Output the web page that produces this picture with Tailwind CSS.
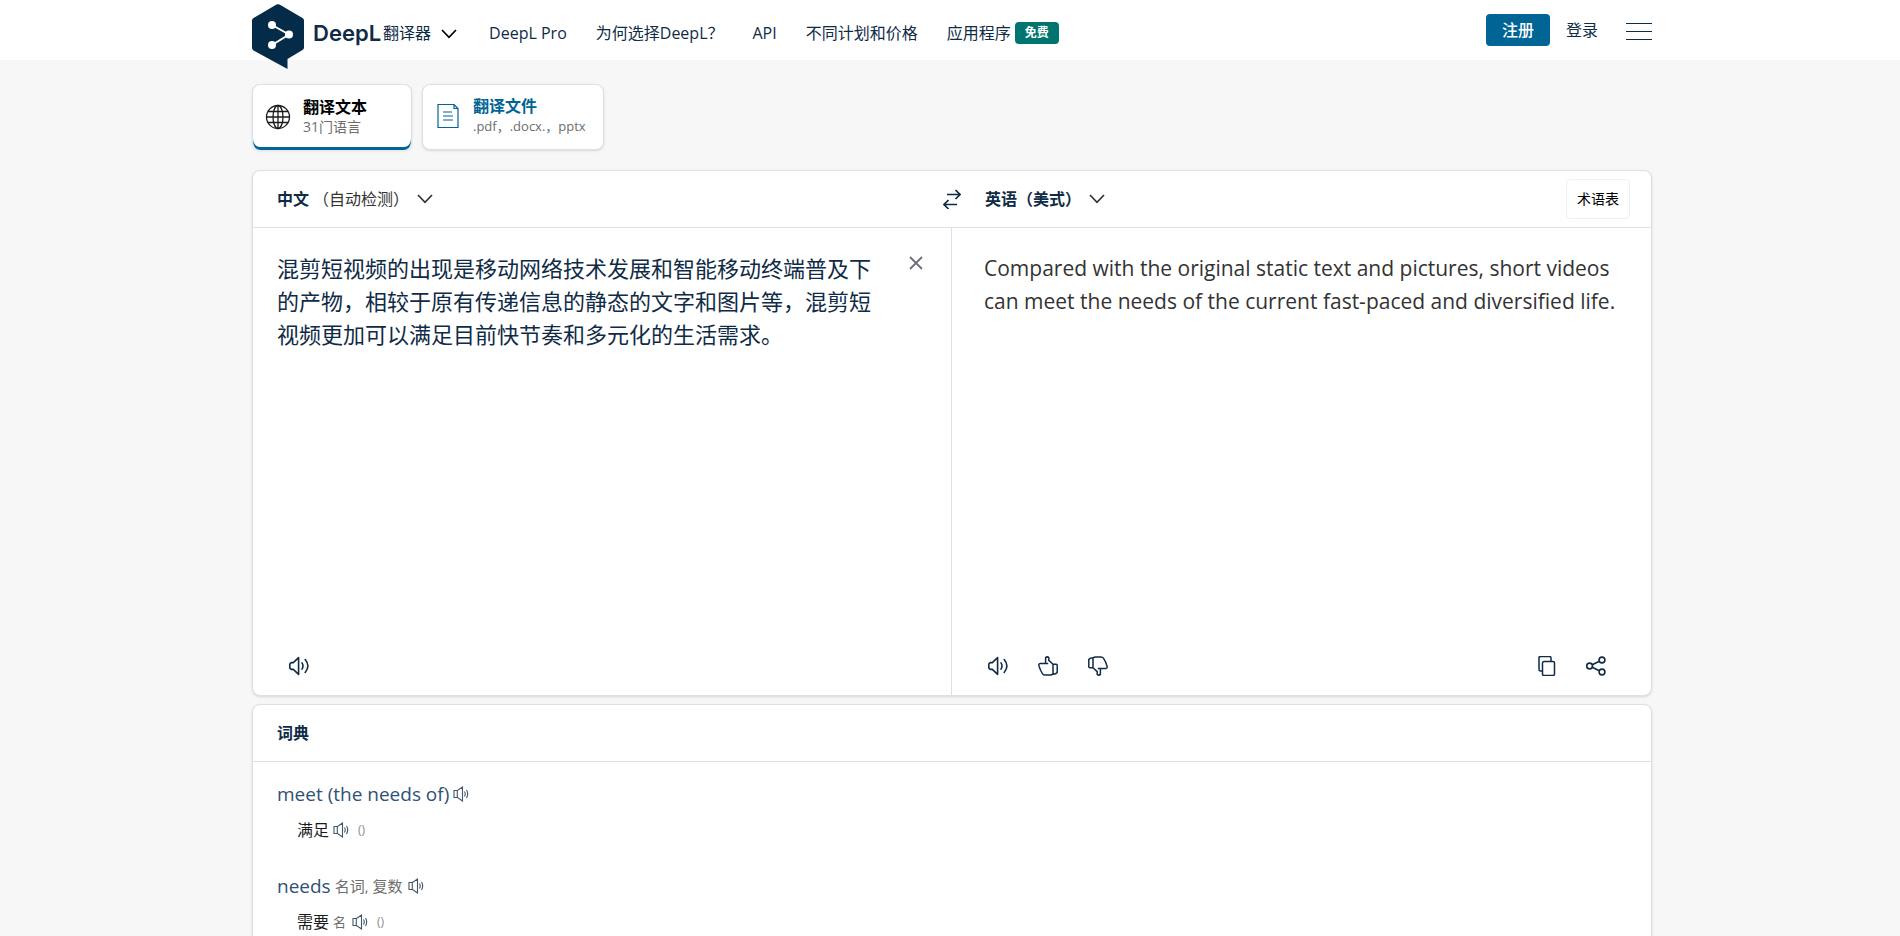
<!DOCTYPE html>
<html lang="zh-CN">
<head>
<meta charset="utf-8">
<meta name="viewport" content="width=device-width, initial-scale=1">
<title>DeepL翻译</title>
<script src="https://cdn.jsdelivr.net/npm/@tailwindcss/browser@4"></script>
</head>
<body class="min-h-screen overflow-hidden bg-[#f7f7f7] font-['Open_Sans','Noto_Sans_CJK_SC',sans-serif] text-base leading-6 text-[#0f2b46]">
<svg class="hidden" aria-hidden="true">
  <symbol id="speaker" viewBox="0 0 20 20"><path d="M9.6 1.6v16.800L4.300 13.400H2.200L.8 12V8l1.400-1.400h2.100z M13 6.900q2 3.100 0 6.200 M16.200 3.600q5.400 6.400 0 12.800" fill="none" stroke="currentColor" stroke-width="1.600" stroke-linejoin="round" stroke-linecap="round"/></symbol>
  <symbol id="speaker-small" viewBox="0 0 17 16"><path d="M9.500 1v14L4.500 11.500H1v-7h3.500z M4.300 4.500v7 M11.500 5.500q1.500 2.500 0 5 M13.500 4q2.400 4 0 8" fill="none" stroke="currentColor" stroke-width="1.100"/></symbol>
  <symbol id="chevron" viewBox="0 0 16 10"><path d="M1 1l7 7.300L15 1" fill="none" stroke="currentColor" stroke-width="1.700"/></symbol>
  <symbol id="thumb" viewBox="0 0 20 20"><path d="M15 8.200H18.200Q19.200 8.200 19.200 9.200V16.500Q18 18.300 15 18.300Z M15 8.200L10.800 4.400V1.600Q9.200.2 7.600 1.600V7.400H9.600 M7.600 7.400H2.200Q.6 7.600.8 9.400Q2 14 4.600 17.800Q5.400 19 7 19H12.600L15 18.200" fill="none" stroke="currentColor" stroke-width="1.500" stroke-linejoin="round" stroke-linecap="round"/></symbol>
</svg>

<header class="h-[60px] bg-white pl-1">
  <div class="mx-auto flex h-[60px] max-w-[1400px] items-center">
    <a href="#" class="flex items-center" aria-label="DeepL 翻译器">
      <svg class="mt-3 h-[65px] w-[52px]" viewBox="0 0 52 65"><path d="M24.500.5q1.500-.7 3 0L50.500 14q1.500.8 1.500 2.500v27q0 1.700-1.500 2.500L35.500 55v10L1.500 46.500Q0 45.500 0 43.500v-27Q0 14.800 1.500 14z" fill="#042b48"/><path d="M20 21l17 9.500L20 41" fill="none" stroke="#fff" stroke-width="2"/><g fill="#fff"><circle cx="20" cy="21" r="4"/><circle cx="37" cy="30.500" r="4"/><circle cx="20" cy="41" r="4"/></g></svg>
      <span class="ml-[9px] mt-1.5 flex items-center"><span class="font-['Inter'] text-[22px] font-semibold">DeepL</span><span class="ml-0.5">翻译器</span></span>
    </a>
    <button class="ml-2 mt-2 p-0.5 text-black" aria-label="更多产品"><svg class="h-[10px] w-4"><use href="#chevron"/></svg></button>
    <nav class="ml-[30px] mt-1.5 flex items-center gap-[29px]">
      <a href="#" class="font-medium">DeepL Pro</a>
      <a href="#">为何选择DeepL？</a>
      <a href="#" class="font-medium">API</a>
      <a href="#">不同计划和价格</a>
      <a href="#" class="flex items-center">应用程序<span class="ml-1 flex h-[22px] items-center rounded bg-[#007570] px-2.5 text-xs font-bold text-white">免费</span></a>
    </nav>
    <div class="ml-auto flex items-center">
      <button class="h-8 w-16 rounded bg-[#006494] font-medium text-white">注册</button>
      <a href="#" class="ml-4">登录</a>
      <button class="ml-7 mt-1" aria-label="菜单"><svg class="h-[18px] w-[26px]" viewBox="0 0 26 18" shape-rendering="crispEdges"><path d="M0 .5h26M0 8.500h26M0 16.500h26" stroke="#0f2b46"/></svg></button>
    </div>
  </div>
</header>

<div class="pl-1">
<main class="mx-auto max-w-[1400px] pt-6">
  <div class="flex gap-[10px]">
    <button class="flex h-[66px] w-40 items-center rounded-lg border border-b-0 border-[#dae1e8] bg-white pb-0.5 pl-3 text-left shadow-[inset_0_-3px_0_#006494,0_1px_3px_#0000001a]">
      <svg class="size-[26px] text-[#1b1b1b]" viewBox="0 0 26 26" fill="none" stroke="currentColor" stroke-width="1.300"><circle cx="13" cy="13" r="11.500"/><ellipse cx="13" cy="13" rx="5" ry="11.500"/><path d="M13 1.500v23M1.500 13h23M3 7.500h20M3 18.500h20"/></svg>
      <span class="ml-3 flex flex-col"><span class="leading-5 font-bold text-black">翻译文本</span><span class="text-sm leading-5 text-[#6e6e6e]">31门语言</span></span>
    </button>
    <button class="flex h-[66px] w-[182px] items-center rounded-lg border border-[#dae1e8] bg-white pb-0.5 pl-3.5 text-left shadow-sm">
      <svg class="h-[26px] w-[22px] text-[#006494]" viewBox="0 0 22 26" fill="none" stroke="currentColor" stroke-width="1.200"><path d="M1 1.500h16l4 4v19H1z M17 1.500v4h4 M6 9h9 M6 13h10 M6 17h10"/></svg>
      <span class="ml-3.5 flex flex-col whitespace-nowrap"><span class="leading-5 font-bold text-[#006494]">翻译文件</span><span class="text-[13px] leading-5 text-[#6e6e6e]">.pdf，.docx.，pptx</span></span>
    </button>
  </div>

  <section class="mt-5 rounded-lg border border-[#dae1e8] bg-white shadow-sm">
    <div class="grid h-[57px] grid-cols-2 border-b border-[#dae1e8]">
      <div class="flex items-center pl-6">
        <button class="flex items-center"><span class="font-bold">中文</span><span class="ml-1 text-[#333]">（自动检测）</span><svg class="ml-2 h-[10px] w-4 text-[#333]"><use href="#chevron"/></svg></button>
        <button class="-mr-[9px] ml-auto" aria-label="交换语言"><svg class="h-5 w-[18px]" viewBox="0 0 18 20" fill="none" stroke="currentColor" stroke-width="1.700"><path d="M4 5.500h13M12.500 1l4.500 4.500L12.500 10M14 15.500H1M5.500 11L1 15.500 5.500 20"/></svg></button>
      </div>
      <div class="flex items-center pl-[33px] pr-[21px]">
        <button class="flex items-center font-bold"><span>英语（美式）</span><svg class="ml-2 h-[10px] w-4 text-[#333]"><use href="#chevron"/></svg></button>
        <button class="ml-auto h-10 w-16 rounded border border-[#f0f0f0] text-sm text-black">术语表</button>
      </div>
    </div>
    <div class="grid h-[467px] grid-cols-2">
      <div class="flex flex-col border-r border-[#dae1e8]">
        <div class="flex flex-1 items-start pl-6 pt-6">
          <textarea aria-label="原文" class="h-full min-w-0 flex-1 resize-none overflow-hidden text-[22px] leading-[33px] outline-none">混剪短视频的出现是移动网络技术发展和智能移动终端普及下的产物，相较于原有传递信息的静态的文字和图片等，混剪短视频更加可以满足目前快节奏和多元化的生活需求。</textarea>
          <button class="ml-9 mr-7 mt-1 text-[#6e6e7a]" aria-label="清除"><svg class="size-[14px]" viewBox="0 0 14 14"><path d="M1 1l12 12M13 1L1 13" stroke="currentColor" stroke-width="1.800"/></svg></button>
        </div>
        <div class="flex h-[58px] items-center pl-9"><button aria-label="朗读原文"><svg class="size-5"><use href="#speaker"/></svg></button></div>
      </div>
      <div class="flex flex-col">
        <div class="flex-1 pl-8 pr-6 pt-6">
          <textarea aria-label="译文" readonly class="h-full w-full resize-none overflow-hidden text-[21px] leading-[33px] text-[#333] outline-none">Compared with the original static text and pictures, short videos can meet the needs of the current fast-paced and diversified life.</textarea>
        </div>
        <div class="flex h-[58px] items-center gap-[30px] pl-9 pr-[45px]">
          <button aria-label="朗读译文"><svg class="size-5"><use href="#speaker"/></svg></button>
          <button aria-label="赞"><svg class="size-5"><use href="#thumb"/></svg></button>
          <button aria-label="踩"><svg class="size-5 rotate-180"><use href="#thumb"/></svg></button>
          <button class="ml-auto" aria-label="复制"><svg class="size-5" viewBox="0 0 20 20" fill="none" stroke="currentColor" stroke-width="1.500"><rect x="6.500" y="5.500" width="12" height="14" rx="1.500"/><path d="M6 15H4.500Q3 15 3 13.500v-12Q3 .5 4.500.5h9Q15 .5 15 2v3"/></svg></button>
          <button aria-label="分享"><svg class="size-5" viewBox="0 0 20 20" fill="none" stroke="currentColor" stroke-width="1.600"><circle cx="3.600" cy="10" r="2.900"/><circle cx="16" cy="4" r="2.900"/><circle cx="16" cy="16" r="2.900"/><path d="M6.200 8.700l7.200-3.400M6.200 11.300l7.200 3.400"/></svg></button>
        </div>
      </div>
    </div>
  </section>

  <section class="mt-2 h-[260px] rounded-lg border border-[#dae1e8] bg-white shadow-sm">
    <h2 class="flex h-[57px] items-center border-b border-[#dae1e8] px-6 font-bold">词典</h2>
    <div class="px-6 pt-4">
      <div class="flex h-8 items-center"><a href="#" class="text-[19px] text-[#2f5175]">meet (the needs of)</a><button class="ml-1 text-[#42566b]" aria-label="朗读"><svg class="h-4 w-[17px]"><use href="#speaker-small"/></svg></button></div>
      <div class="mt-1 flex h-8 items-center pl-5"><a href="#" class="text-[#1b1b1b]">满足</a><button class="ml-1 text-[#42566b]" aria-label="朗读"><svg class="h-4 w-[17px]"><use href="#speaker-small"/></svg></button><span class="ml-2 text-xs text-[#8a8a8a]">()</span></div>
      <div class="mt-6 flex h-8 items-center"><a href="#" class="text-[19px] text-[#2f5175]">needs</a><span class="ml-1 text-[15px] text-[#6e6e6e]">名词, 复数</span><button class="ml-1.5 text-[#42566b]" aria-label="朗读"><svg class="h-4 w-[17px]"><use href="#speaker-small"/></svg></button></div>
      <div class="mt-1 flex h-8 items-center pl-5"><a href="#" class="text-[#1b1b1b]">需要</a><span class="ml-1 text-[13px] text-[#6e6e6e]">名</span><button class="ml-1.5 text-[#42566b]" aria-label="朗读"><svg class="h-4 w-[17px]"><use href="#speaker-small"/></svg></button><span class="ml-2 text-xs text-[#8a8a8a]">()</span></div>
    </div>
  </section>
</main>
</div>
</body>
</html>
